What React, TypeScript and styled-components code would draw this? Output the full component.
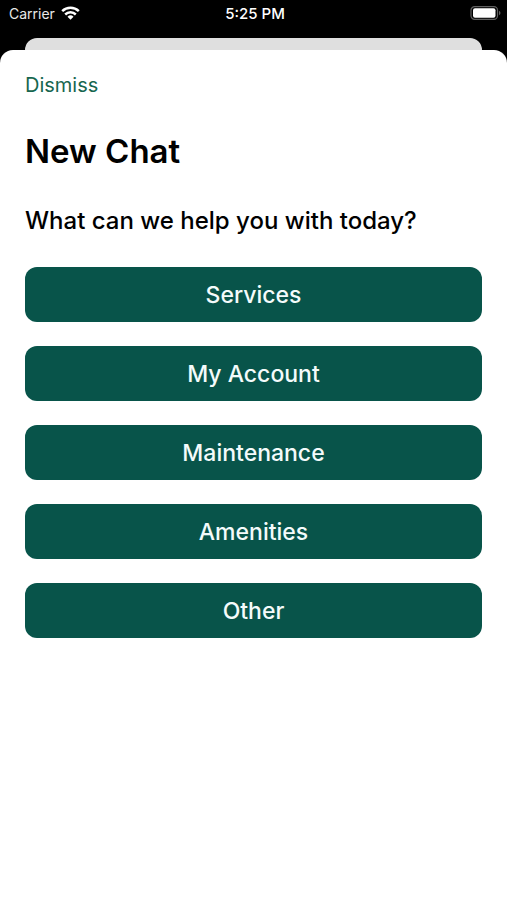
import React from "react";
import styled, { createGlobalStyle } from "styled-components";

const GlobalStyle = createGlobalStyle`
  * { box-sizing: border-box; }
  body { margin: 0; background: #000; font-family: Inter, "Liberation Sans", sans-serif; }
`;

const Screen = styled.div`
  display: flex;
  flex-direction: column;
  min-height: 100vh;
  background: #000;
`;

const StatusBar = styled.header`
  display: grid;
  grid-template-columns: 1fr auto 1fr;
  align-items: center;
  height: 26px;
  padding: 0 6px 0 9px;
  color: #e8e8e8;
  font-size: 14px;
`;

const Carrier = styled.div`
  display: flex;
  align-items: center;
  gap: 6px;
`;

const Clock = styled.time`
  color: #fff;
  font-size: 15px;
  font-weight: 500;
`;

const BatteryIcon = styled.svg`
  justify-self: end;
`;

const SheetBehind = styled.div`
  height: 12px;
  margin: 12px 25px 0;
  border-radius: 12px 12px 0 0;
  background: #dfdfdf;
`;

const Sheet = styled.main`
  flex: 1;
  display: flex;
  flex-direction: column;
  align-items: flex-start;
  padding: 23px 25px;
  border-radius: 13px 13px 0 0;
  background: #fff;
`;

const Dismiss = styled.button`
  padding: 0;
  border: 0;
  background: none;
  color: #17664f;
  font: 400 20px/24px Inter, sans-serif;
  cursor: pointer;
`;

const Title = styled.h1`
  margin: 32px 0 0;
  font-size: 33px;
  font-weight: 600;
  line-height: 44px;
`;

const Question = styled.h2`
  margin: 33px 0 0;
  font-size: 24px;
  font-weight: 500;
  line-height: 30px;
`;

const TopicList = styled.div`
  display: grid;
  align-self: stretch;
  gap: 24px;
  margin-top: 31px;
`;

const Topic = styled.button`
  height: 55px;
  padding: 0 16px;
  border: 0;
  border-radius: 12px;
  background: #08544a;
  color: #f4fbfb;
  font: 500 23px/30px Inter, sans-serif;
  cursor: pointer;
`;

const topics = ["Services", "My Account", "Maintenance", "Amenities", "Other"];

export default function App() {
  return (
    <Screen>
      <GlobalStyle />
      <StatusBar>
        <Carrier>
          Carrier
          <svg width="19" height="14" viewBox="0 0 19 14" fill="none" stroke="#fff" strokeWidth="2.5" aria-hidden="true">
            <path d="M1.2 5.2a12 12 0 0 1 16.6 0M4.2 8.5a7.6 7.6 0 0 1 10.6 0" />
            <path d="M9.5 13.8 6.5 10.8a4.3 4.3 0 0 1 6 0Z" fill="#fff" stroke="none" />
          </svg>
        </Carrier>
        <Clock>5:25 PM</Clock>
        <BatteryIcon width="31" height="14" viewBox="0 0 31 14" aria-hidden="true">
          <rect x="1" y="0.7" width="26.5" height="12.6" rx="3.6" fill="none" stroke="#606060" strokeWidth="1.2" />
          <rect x="3" y="2.3" width="22.5" height="9.4" rx="2" fill="#fff" />
          <path d="M29 4.8c2 .8 2 3.6 0 4.4Z" fill="#606060" />
        </BatteryIcon>
      </StatusBar>
      <SheetBehind />
      <Sheet>
        <Dismiss type="button">Dismiss</Dismiss>
        <Title>New Chat</Title>
        <Question>What can we help you with today?</Question>
        <TopicList>
          {topics.map((topic) => (
            <Topic key={topic} type="button">{topic}</Topic>
          ))}
        </TopicList>
      </Sheet>
    </Screen>
  );
}
